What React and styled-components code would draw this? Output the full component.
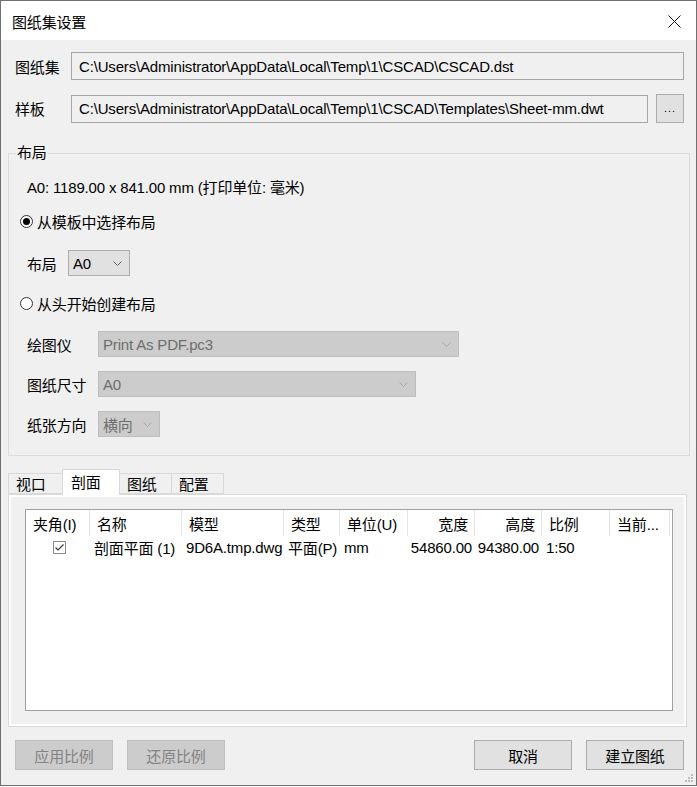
import React from 'react';
import styled, { createGlobalStyle } from 'styled-components';

const GlobalStyle = createGlobalStyle`
	html, body {
		margin: 0;
		padding: 0;
		background: #ffffff;
	}
	body {
		font-family: "Liberation Sans", "Noto Sans CJK SC", sans-serif;
		font-size: 15px;
		letter-spacing: -0.17px;
		color: #000000;
	}
	* {
		box-sizing: border-box;
	}
`;

const Window = styled.div`
	width: 697px;
	height: 786px;
	border: 1px solid #707070;
	background: #f0f0f0;
	display: flex;
	flex-direction: column;
`;

const TitleBar = styled.div`
	height: 39px;
	background: #ffffff;
	display: flex;
	align-items: center;
	justify-content: space-between;
	padding-left: 11px;
	padding-top: 2px;
`;

const CloseButton = styled.div`
	width: 44px;
	height: 100%;
	display: flex;
	align-items: center;
	justify-content: center;
`;

const PathRow = styled.div`
	display: flex;
	align-items: center;
	margin: ${(p) => p.$mt}px 12px 0 14px;
`;

const PathLabel = styled.span`
	width: 56px;
	flex: none;
`;

const PathField = styled.div`
	flex: 1;
	height: 28px;
	border: 1px solid #a6a6a6;
	background: #f0f0f0;
	padding-left: 7px;
	display: flex;
	align-items: center;
	white-space: nowrap;
	overflow: hidden;
`;

const BrowseButton = styled.div`
	width: 28px;
	height: 29px;
	margin-left: 8px;
	border: 1px solid #adadad;
	background: #e1e1e1;
	display: flex;
	align-items: flex-end;
	justify-content: center;
	padding-bottom: 8px;
	font-size: 11px;
	letter-spacing: 1px;
`;

const GroupBox = styled.fieldset`
	margin: 20px 6px 0 7px;
	border: 1px solid #dcdcdc;
	padding: 13px 10px 18px 18px;
	min-width: 0;
	display: flex;
	flex-direction: column;
`;

const GroupTitle = styled.legend`
	margin-left: -11px;
	padding: 0 1px;
	line-height: 20px;
`;

const Line = styled.div`
	display: flex;
	align-items: center;
	height: ${(p) => p.$h || 20}px;
	margin-top: ${(p) => p.$mt || 0}px;
	margin-left: ${(p) => p.$ml || 0}px;
	white-space: nowrap;
`;

const RadioDot = styled.span`
	width: 13px;
	height: 13px;
	border-radius: 50%;
	border: 1px solid #333333;
	background: #ffffff;
	display: inline-flex;
	align-items: center;
	justify-content: center;
	margin-right: 4px;
	&::after {
		content: '';
		width: 7px;
		height: 7px;
		border-radius: 50%;
		background: ${(p) => (p.$on ? '#000000' : 'transparent')};
	}
`;

const FieldLabel = styled.span`
	width: ${(p) => p.$w}px;
	flex: none;
`;

const Combo = styled.div`
	width: ${(p) => p.$w}px;
	height: 26px;
	display: flex;
	align-items: center;
	justify-content: space-between;
	padding: 0 7px 0 4px;
	background: ${(p) => (p.$disabled ? '#cccccc' : '#e1e1e1')};
	border: 1px solid ${(p) => (p.$disabled ? '#bfbfbf' : '#adadad')};
	color: ${(p) => (p.$disabled ? '#6d6d6d' : '#000000')};
`;

const TabStrip = styled.div`
	display: flex;
	align-items: flex-end;
	height: 25px;
	margin: 13px 9px 0 7px;
	position: relative;
	z-index: 1;
`;

const Tab = styled.div`
	width: ${(p) => p.$w}px;
	height: ${(p) => (p.$active ? 26 : 21)}px;
	margin-bottom: ${(p) => (p.$active ? -1 : 0)}px;
	border: 1px solid #d9d9d9;
	border-bottom: ${(p) => (p.$active ? 'none' : '1px solid #d9d9d9')};
	margin-left: ${(p) => (p.$first ? 0 : -1)}px;
	background: ${(p) => (p.$active ? '#ffffff' : '#f0f0f0')};
	display: flex;
	align-items: center;
	padding-left: ${(p) => (p.$active ? 8 : 7)}px;
	padding-bottom: ${(p) => (p.$active ? 3 : 0)}px;
`;

const TabPanel = styled.div`
	margin: 0 9px 0 7px;
	height: 233px;
	border: 1px solid #d9d9d9;
	background: #ffffff;
	padding: 2px;
`;

const TabPage = styled.div`
	height: 100%;
	background: #f0f0f0;
	padding: 12px 11px 13px 14px;
`;

const ListView = styled.div`
	height: 100%;
	border: 1px solid #a0a0a0;
	background: #ffffff;
`;

const columns = '64px 92px 102px 56px 68px 67px 67px 68px 60px';

const HeaderRow = styled.div`
	display: grid;
	grid-template-columns: ${columns};
	height: 26px;
`;

const HeaderCell = styled.div`
	display: flex;
	align-items: center;
	justify-content: ${(p) => (p.$right ? 'flex-end' : 'flex-start')};
	padding: 0 6px 0 7px;
	border-right: 1px solid #e5e5e5;
	white-space: nowrap;
	overflow: hidden;
`;

const DataRow = styled.div`
	display: grid;
	grid-template-columns: ${columns};
	height: 22px;
`;

const DataCell = styled.div`
	display: flex;
	align-items: center;
	justify-content: ${(p) => (p.$center ? 'center' : p.$right ? 'flex-end' : 'flex-start')};
	padding: ${(p) => (p.$center ? '0 0 0 2px' : '0 3px 0 4px')};
	white-space: nowrap;
	overflow: hidden;
`;

const Footer = styled.div`
	display: flex;
	justify-content: space-between;
	margin: 13px 12px 0 14px;
`;

const ButtonGroup = styled.div`
	display: flex;
	gap: 14px;
`;

const Button = styled.div`
	width: 98px;
	height: 30px;
	display: flex;
	align-items: center;
	justify-content: center;
	background: ${(p) => (p.$disabled ? '#cccccc' : '#e1e1e1')};
	border: 1px solid ${(p) => (p.$disabled ? '#bfbfbf' : '#adadad')};
	color: ${(p) => (p.$disabled ? '#838383' : '#000000')};
`;

const GripRow = styled.div`
	display: flex;
	justify-content: flex-end;
	margin: 3px 3px 0 0;
`;

const Chevron = ({ color = '#606060' }) => (
	<svg width="9" height="5" viewBox="0 0 9 5">
		<path d="M0.5 0.5 L4.5 4.5 L8.5 0.5" fill="none" stroke={color} strokeWidth="1" />
	</svg>
);

const CheckBox = () => (
	<svg width="13" height="13" viewBox="0 0 13 13">
		<rect x="0.5" y="0.5" width="12" height="12" fill="#ffffff" stroke="#8a8a8a" />
		<path d="M2.5 6.5 L5 9 L10.5 3.5" fill="none" stroke="#333333" strokeWidth="1.1" />
	</svg>
);

const headers = [
	{ t: '夹角(I)' },
	{ t: '名称' },
	{ t: '模型' },
	{ t: '类型' },
	{ t: '单位(U)' },
	{ t: '宽度', right: true },
	{ t: '高度', right: true },
	{ t: '比例' },
	{ t: '当前...' },
];

const App = () => {
	return (
		<>
			<GlobalStyle />
			<Window>
				<TitleBar>
					<span>图纸集设置</span>
					<CloseButton>
						<svg width="13" height="13" viewBox="0 0 13 13">
							<path d="M0.5 0.5 L12.5 12.5 M12.5 0.5 L0.5 12.5" stroke="#111111" strokeWidth="1" />
						</svg>
					</CloseButton>
				</TitleBar>

				<PathRow $mt={12}>
					<PathLabel>图纸集</PathLabel>
					<PathField>C:\Users\Administrator\AppData\Local\Temp\1\CSCAD\CSCAD.dst</PathField>
				</PathRow>
				<PathRow $mt={14}>
					<PathLabel>样板</PathLabel>
					<PathField>C:\Users\Administrator\AppData\Local\Temp\1\CSCAD\Templates\Sheet-mm.dwt</PathField>
					<BrowseButton>...</BrowseButton>
				</PathRow>

				<GroupBox>
					<GroupTitle>布局</GroupTitle>
					<Line>A0: 1189.00 x 841.00 mm (打印单位: 毫米)</Line>
					<Line $mt={15} $ml={-7}>
						<RadioDot $on />
						从模板中选择布局
					</Line>
					<Line $mt={19} $h={26}>
						<FieldLabel $w={41}>布局</FieldLabel>
						<Combo $w={62}>
							<span>A0</span>
							<Chevron />
						</Combo>
					</Line>
					<Line $mt={17} $ml={-7}>
						<RadioDot />
						从头开始创建布局
					</Line>
					<Line $mt={18} $h={26}>
						<FieldLabel $w={71}>绘图仪</FieldLabel>
						<Combo $w={361} $disabled>
							<span>Print As PDF.pc3</span>
							<Chevron color="#a8a8a8" />
						</Combo>
					</Line>
					<Line $mt={14} $h={26}>
						<FieldLabel $w={71}>图纸尺寸</FieldLabel>
						<Combo $w={318} $disabled>
							<span>A0</span>
							<Chevron color="#a8a8a8" />
						</Combo>
					</Line>
					<Line $mt={14} $h={26}>
						<FieldLabel $w={71}>纸张方向</FieldLabel>
						<Combo $w={62} $disabled>
							<span>横向</span>
							<Chevron color="#a8a8a8" />
						</Combo>
					</Line>
				</GroupBox>

				<TabStrip>
					<Tab $w={55} $first>视口</Tab>
					<Tab $w={58} $active>剖面</Tab>
					<Tab $w={53}>图纸</Tab>
					<Tab $w={53}>配置</Tab>
				</TabStrip>
				<TabPanel>
					<TabPage>
						<ListView>
							<HeaderRow>
								{headers.map((h) => (
									<HeaderCell key={h.t} $right={h.right}>
										{h.t}
									</HeaderCell>
								))}
							</HeaderRow>
							<DataRow>
								<DataCell $center>
									<CheckBox />
								</DataCell>
								<DataCell>剖面平面 (1)</DataCell>
								<DataCell>9D6A.tmp.dwg</DataCell>
								<DataCell>平面(P)</DataCell>
								<DataCell>mm</DataCell>
								<DataCell $right>54860.00</DataCell>
								<DataCell $right>94380.00</DataCell>
								<DataCell>1:50</DataCell>
								<DataCell />
							</DataRow>
						</ListView>
					</TabPage>
				</TabPanel>

				<Footer>
					<ButtonGroup>
						<Button $disabled>应用比例</Button>
						<Button $disabled>还原比例</Button>
					</ButtonGroup>
					<ButtonGroup>
						<Button>取消</Button>
						<Button>建立图纸</Button>
					</ButtonGroup>
				</Footer>
				<GripRow>
					<svg width="9" height="9" viewBox="0 0 9 9">
						<g fill="#bcbcbc">
							<rect x="7" y="1" width="2" height="2" />
							<rect x="4" y="4" width="2" height="2" />
							<rect x="7" y="4" width="2" height="2" />
							<rect x="1" y="7" width="2" height="2" />
							<rect x="4" y="7" width="2" height="2" />
							<rect x="7" y="7" width="2" height="2" />
						</g>
					</svg>
				</GripRow>
			</Window>
		</>
	);
};

export default App;
